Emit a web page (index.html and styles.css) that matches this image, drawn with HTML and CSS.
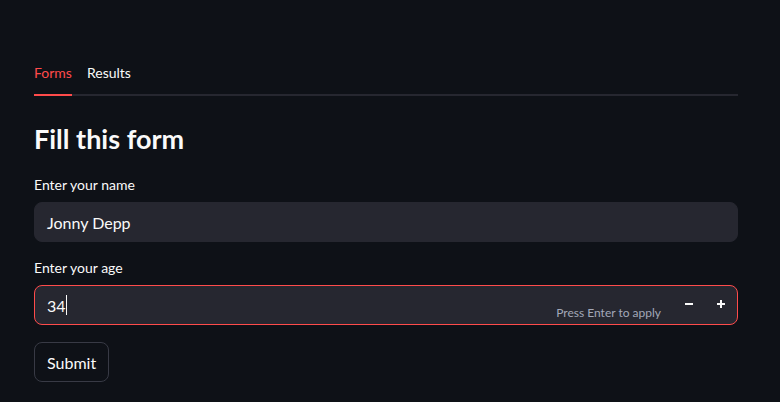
FILE: index.html
```html
<!DOCTYPE html>
<html lang="en">
<head>
    <meta charset="UTF-8">
    <meta name="viewport" content="width=device-width, initial-scale=1.0">
    <title>Fill this form</title>
    <link rel="stylesheet" href="styles.css">
</head>
<body>
    <main class="block">
        <div class="tabs">
            <div class="tab active">Forms</div>
            <div class="tab">Results</div>
        </div>

        <h2>Fill this form</h2>

        <div class="field">
            <label>Enter your name</label>
            <div class="input">Jonny Depp</div>
        </div>

        <div class="field">
            <label>Enter your age</label>
            <div class="input focused">
                <span class="value">34<span class="caret"></span></span>
                <span class="hint">Press Enter to apply</span>
                <span class="step">
                    <svg width="10" height="10" viewBox="0 0 10 10"><path d="M1 5h8" stroke="#fafafa" stroke-width="2"/></svg>
                </span>
                <span class="step">
                    <svg width="10" height="10" viewBox="0 0 10 10"><path d="M1 5h8M5 1v8" stroke="#fafafa" stroke-width="2"/></svg>
                </span>
            </div>
        </div>

        <button class="submit">Submit</button>
    </main>
</body>
</html>
```

FILE: styles.css
```css
body {
    margin: 0;
    background-color: #0e1117;
    color: #fafafa;
    font-family: "Lato", "Noto Sans", sans-serif;
}
.block {
    width: 704px;
    padding: 62px 0 0 34px;
}
.tabs {
    display: flex;
    gap: 15px;
    border-bottom: 2px solid #262730;
}
.tab {
    font-size: 14px;
    padding: 2px 0 13px;
    margin-bottom: -2px;
    border-bottom: 2px solid transparent;
}
.tab.active {
    color: #ff4b4b;
    border-bottom-color: #ff4b4b;
}
h2 {
    font-size: 27px;
    font-weight: 700;
    margin: 26px 0 20px;
    line-height: 34px;
}
.field {
    margin-bottom: 17px;
}
label {
    display: block;
    font-size: 14px;
    line-height: 18px;
    margin-bottom: 8px;
}
.input {
    display: flex;
    align-items: center;
    height: 40px;
    box-sizing: border-box;
    padding: 0 12px;
    background-color: #262730;
    border: 1px solid #262730;
    border-radius: 8px;
    font-size: 16px;
}
.input.focused {
    border-color: #ff4b4b;
    padding-right: 0;
}
.value {
    flex: 1;
    display: flex;
    align-items: center;
}
.caret {
    width: 1px;
    height: 20px;
    background: #fafafa;
}
.hint {
    font-size: 12px;
    color: #a3a8b8;
    align-self: flex-end;
    margin-bottom: 4px;
}
.step {
    width: 32px;
    display: flex;
    justify-content: center;
    margin-top: -2px;
}
.hint + .step {
    margin-left: 12px;
}
.submit {
    background-color: #0e1117;
    color: #fafafa;
    border: 1px solid #383a45;
    border-radius: 8px;
    font-family: inherit;
    font-size: 16px;
    padding: 0 12px;
    height: 40px;
}
```
